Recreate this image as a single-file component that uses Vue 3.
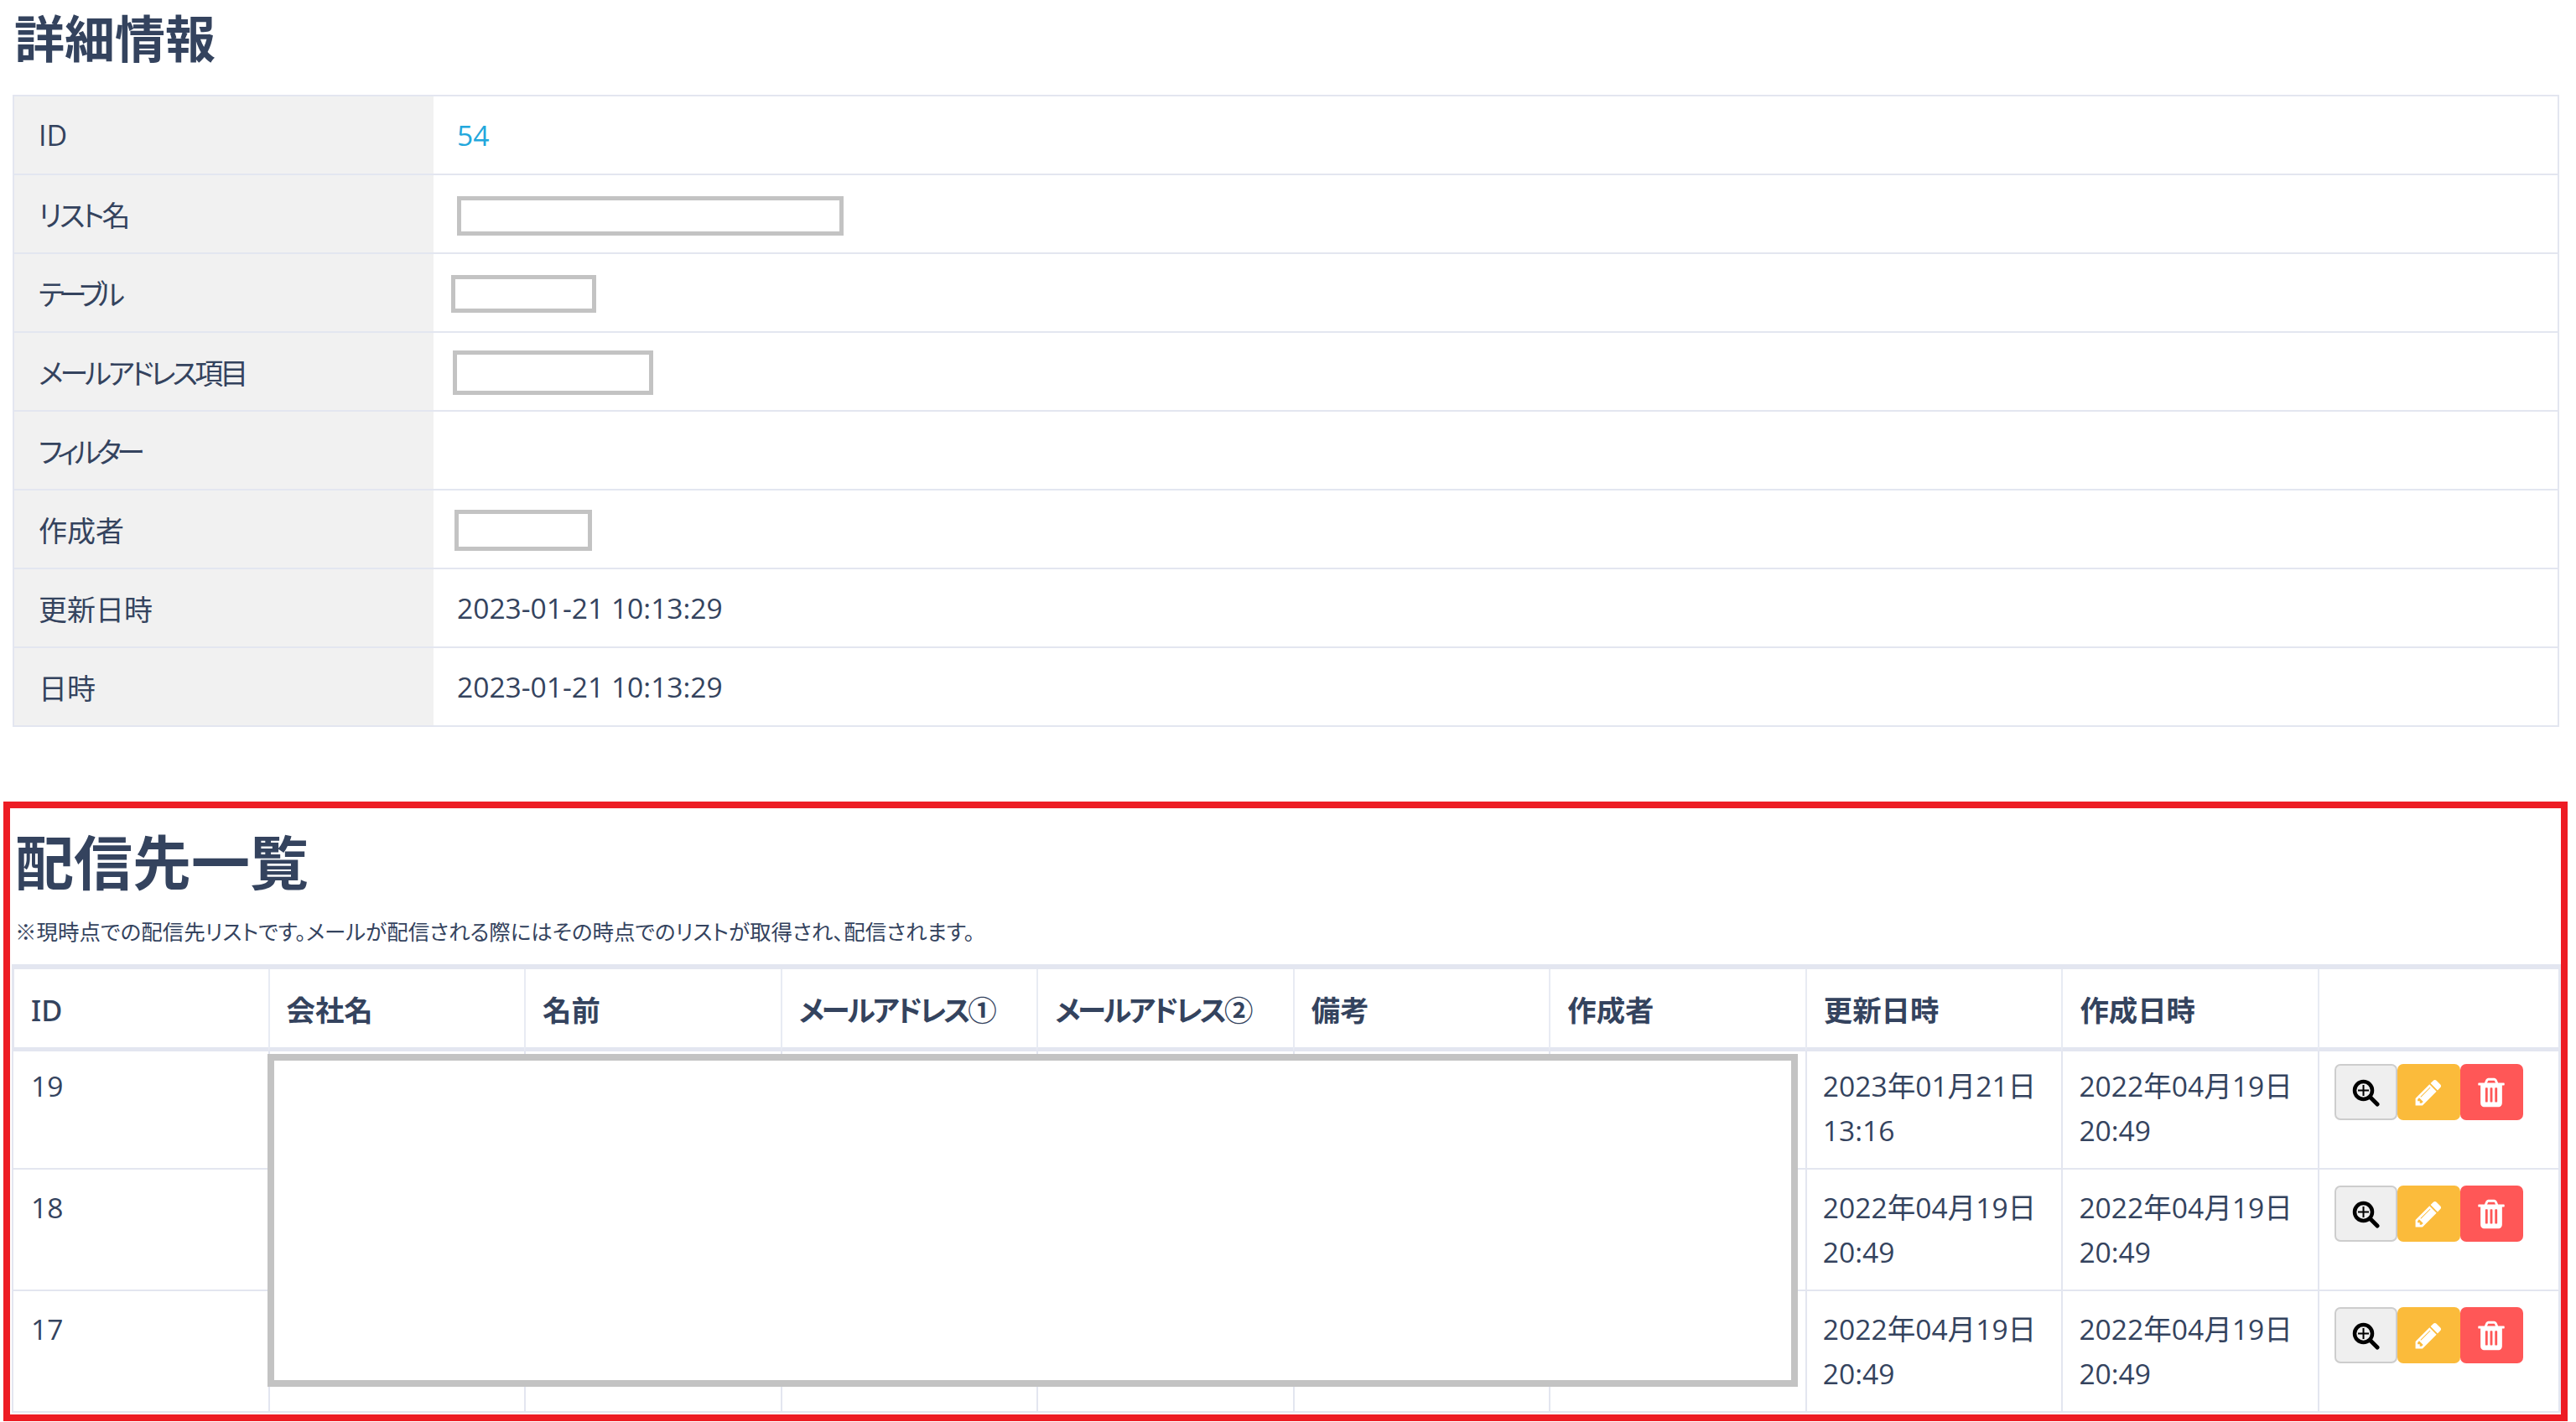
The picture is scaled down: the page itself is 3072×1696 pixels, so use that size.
<script setup>
const details = [
  { label: 'ID', link: '54' },
  { label: 'リスト名', mask: 'm1', kana: 'k-a' },
  { label: 'テーブル', mask: 'm2', kana: 'k-b' },
  { label: 'メールアドレス項目', mask: 'm3', kana: 'k-c' },
  { label: 'フィルター', kana: 'k-d' },
  { label: '作成者', mask: 'm4' },
  { label: '更新日時', text: '2023-01-21 10:13:29' },
  { label: '日時', text: '2023-01-21 10:13:29' },
]
const heads = ['ID', '会社名', '名前', 'メールアドレス①', 'メールアドレス②', '備考', '作成者', '更新日時', '作成日時', '']
const rows = [
  { id: '19', up: ['2023年01月21日', '13:16'], cr: ['2022年04月19日', '20:49'] },
  { id: '18', up: ['2022年04月19日', '20:49'], cr: ['2022年04月19日', '20:49'] },
  { id: '17', up: ['2022年04月19日', '20:49'], cr: ['2022年04月19日', '20:49'] },
]
const blanks = [1, 2, 3, 4, 5, 6]
</script>

<template>
  <div class="page">
    <h2 class="title-a">詳細情報</h2>
    <table class="detail">
      <tbody>
        <tr v-for="d in details" :key="d.label">
          <th :class="d.kana">{{ d.label }}</th>
          <td>
            <a v-if="d.link" class="link">{{ d.link }}</a>
            <span v-else-if="d.text">{{ d.text }}</span>
            <div v-else-if="d.mask" class="mask" :class="d.mask"></div>
          </td>
        </tr>
      </tbody>
    </table>

    <section class="frame">
      <h2 class="title-b">配信先一覧</h2>
      <p class="note">※現時点での配信先リストです。メールが配信される際にはその時点でのリストが取得され、配信されます。</p>
      <div class="list-wrap">
        <table class="list">
          <thead>
            <tr>
              <th v-for="(h, i) in heads" :key="i" :class="{ last: i === 9, kana: i === 3 || i === 4 }">{{ h }}</th>
            </tr>
          </thead>
          <tbody>
            <tr v-for="r in rows" :key="r.id">
              <td>{{ r.id }}</td>
              <td v-for="b in blanks" :key="b"></td>
              <td>{{ r.up[0] }}<br />{{ r.up[1] }}</td>
              <td>{{ r.cr[0] }}<br />{{ r.cr[1] }}</td>
              <td class="ops">
                <div class="btns">
                  <button class="btn view" type="button">
                    <svg width="34" height="34" viewBox="0 0 34 34">
                      <circle cx="14.5" cy="14.5" r="10.5" fill="none" stroke="#000" stroke-width="4.5" />
                      <path d="M14.5 8v13M8 14.5h13" stroke="#000" stroke-width="2" fill="none" />
                      <path d="M23 23l8 8" stroke="#000" stroke-width="5" stroke-linecap="round" fill="none" />
                    </svg>
                  </button>
                  <button class="btn edit" type="button">
                    <svg width="36" height="36" viewBox="0 0 1792 1792">
                      <path fill="#fff" d="M491 1536l91-91-235-235-91 91v107h128v128h107zm523-928q0-22-22-22-10 0-17 7l-542 542q-7 7-7 17 0 22 22 22 10 0 17-7l542-542q7-7 7-17zm-54-192l416 416-832 832h-416v-416zm683 96q0 53-37 90l-166 166-416-416 166-165q36-38 90-38 53 0 91 38l235 234q37 39 37 91z" />
                    </svg>
                  </button>
                  <button class="btn del" type="button">
                    <svg width="40" height="40" viewBox="0 0 1792 1792">
                      <path fill="#fff" d="M704 1376v-704q0-14-9-23t-23-9h-64q-14 0-23 9t-9 23v704q0 14 9 23t23 9h64q14 0 23-9t9-23zm256 0v-704q0-14-9-23t-23-9h-64q-14 0-23 9t-9 23v704q0 14 9 23t23 9h64q14 0 23-9t9-23zm256 0v-704q0-14-9-23t-23-9h-64q-14 0-23 9t-9 23v704q0 14 9 23t23 9h64q14 0 23-9t9-23zm-544-992h448l-48-117q-7-9-17-11h-317q-10 2-17 11zm928 32v64q0 14-9 23t-23 9h-96v948q0 83-47 143.5t-113 60.5h-832q-66 0-113-58.5t-47-141.5v-952h-96q-14 0-23-9t-9-23v-64q0-14 9-23t23-9h309l70-167q15-37 54-63t79-26h320q40 0 79 26t54 63l70 167h309q14 0 23 9t9 23z" />
                    </svg>
                  </button>
                </div>
              </td>
            </tr>
          </tbody>
        </table>
        <div class="cover"></div>
      </div>
    </section>
  </div>
</template>

<style>
html, body { background: #fff; }
</style>

<style scoped>
.page {
  width: 3072px;
  height: 1696px;
  overflow: hidden;
  box-sizing: border-box;
  color: #34435e;
  font-family: "Open Sans", "Noto Sans CJK JP", sans-serif;
  font-feature-settings: "palt";
  position: relative;
}
.title-a {
  margin: 0;
  padding-left: 17px;
  height: 113px;
  box-sizing: border-box;
  font-size: 60px;
  line-height: 86px;
  font-weight: 700;
  font-family: "Noto Sans CJK JP", sans-serif;
}
.detail {
  margin-left: 15px;
  width: 3037px;
  table-layout: fixed;
  border-collapse: separate;
  border-spacing: 0;
  border-top: 2px solid #e3e6f0;
  border-left: 2px solid #e3e6f0;
  border-right: 2px solid #e3e6f0;
  font-size: 33.6px;
}
.detail th {
  width: 500px;
  height: 94px;
  padding: 0 0 0 29px;
  box-sizing: border-box;
  background: #f1f1f1;
  border-bottom: 2px solid #e3e6f0;
  text-align: left;
  font-weight: 400;
  font-size: 34px;
}
.detail th.k-a { letter-spacing: -3px; }
.detail th.k-b { letter-spacing: -7px; }
.detail th.k-c { letter-spacing: -4px; }
.detail th.k-d { letter-spacing: -5.5px; }
.detail td {
  height: 94px;
  padding: 0 0 0 28px;
  box-sizing: border-box;
  border-bottom: 2px solid #e3e6f0;
}
.link { color: #22a7dc; }
.mask {
  border: 5px solid #c3c3c3;
  box-sizing: border-box;
  background: #fff;
}
.m1 { width: 461px; height: 47px; margin-top: 4px; }
.m2 { width: 173px; height: 45px; margin-left: -7px; margin-top: 2px; }
.m3 { width: 239px; height: 53px; margin-left: -5px; margin-top: 2px; }
.m4 { width: 164px; height: 49px; margin-left: -3px; margin-top: 2px; }

.frame {
  position: relative;
  margin: 89px 0 0 4px;
  width: 3058px;
  height: 739px;
  box-sizing: border-box;
  border: 8px solid #ed1c24;
}
.title-b {
  margin: 0;
  padding: 14px 0 0 6px;
  height: 118px;
  box-sizing: border-box;
  font-size: 70px;
  line-height: 96px;
  font-weight: 700;
  font-family: "Noto Sans CJK JP", sans-serif;
}
.note {
  margin: 0;
  padding-left: 6px;
  height: 68px;
  font-size: 25.5px;
  line-height: 58px;
}
.list-wrap {
  position: relative;
  margin-left: 2px;
  width: 3040px;
}
.list {
  width: 100%;
  table-layout: fixed;
  border-collapse: separate;
  border-spacing: 0;
  font-size: 33.6px;
  line-height: 53px;
  border-top: 6px solid #e3e6f0;
}
.list th {
  width: 305.5px;
  height: 98px;
  padding: 4px 0 0 20px;
  box-sizing: border-box;
  border-left: 2px solid #e8ebf3;
  border-bottom: 5px solid #e3e6f0;
  text-align: left;
  font-weight: 700;
  font-size: 34.4px;
  font-family: "Noto Sans", "Noto Sans CJK JP", sans-serif;
}
.list th.kana { letter-spacing: -3.2px; }
.list th:first-child { border-left: 3px solid #e3e6f0; padding-left: 20px; font-weight: 500; }
.list th.last {
  width: 290px;
  border-right: 3px solid #e3e6f0;
}
.list td {
  padding: 19px 0 18px 19px;
  box-sizing: border-box;
  border-left: 2px solid #e3e6f0;
  border-bottom: 2px solid #e3e6f0;
  vertical-align: top;
  height: 145px;
}
.list td:first-child { padding-left: 21px; }
.list tbody tr:first-child td { padding-top: 15px; height: 141px; }
.list td.ops { border-right: 3px solid #e3e6f0; padding-left: 18px; padding-right: 0; }
.btns { display: flex; }
.btn {
  width: 75px;
  height: 67px;
  box-sizing: border-box;
  padding: 0;
  border: 0;
  border-radius: 7px;
  display: flex;
  align-items: center;
  justify-content: center;
}
.view { background: #efefef; border: 2px solid #cdcdcd; }
.edit { background: #fbbb3b; }
.del { background: #ff5757; }
.cover {
  position: absolute;
  left: 305px;
  top: 107px;
  width: 1825px;
  height: 397px;
  box-sizing: border-box;
  border: 8px solid #c3c3c3;
  background: #fff;
}
</style>
